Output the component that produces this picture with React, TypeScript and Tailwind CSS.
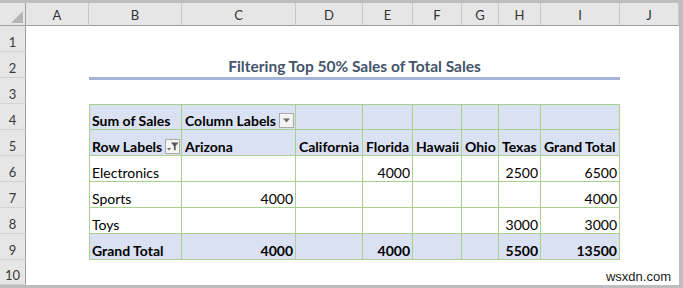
import { Fragment } from "react";
import clsx from "clsx";

const letters = ["A", "B", "C", "D", "E", "F", "G", "H", "I", "J"];

// rows 4..9, columns B..I
const pivot: string[][] = [
  ["Sum of Sales", "Column Labels", "", "", "", "", "", ""],
  ["Row Labels", "Arizona", "California", "Florida", "Hawaii", "Ohio", "Texas", "Grand Total"],
  ["Electronics", "", "", "4000", "", "", "2500", "6500"],
  ["Sports", "4000", "", "", "", "", "", "4000"],
  ["Toys", "", "", "", "", "", "3000", "3000"],
  ["Grand Total", "4000", "", "4000", "", "", "5500", "13500"],
];

const isNum = (s: string) => /^\d+$/.test(s);

const DropBtn = () => (
  <span className="ml-auto mr-[1px] mb-[1px] flex h-[15px] w-[15px] shrink-0 items-center justify-center self-end border border-[#ababab] bg-[#f3f3f3]">
    <svg width="9" height="5" viewBox="0 0 9 5">
      <path d="M1 0.5h7L4.5 4.5z" fill="#6e6e6e" />
    </svg>
  </span>
);

const FilterBtn = () => (
  <span className="ml-auto mr-[1px] mb-[1px] flex h-[15px] w-[15px] shrink-0 items-center justify-center self-end border border-[#ababab] bg-[#f3f3f3]">
    <svg width="13" height="11" viewBox="0 0 13 11">
      <path d="M1 7h4L3 9.5z" fill="#6e6e6e" />
      <path d="M5 1.5h7.5L9.6 5v4.8L7.9 8.6V5z" fill="#555" />
    </svg>
  </span>
);

const RowNum = ({ n }: { n: number }) => (
  <div className="flex items-end justify-center border-r border-b border-r-[#9f9f9f] border-b-[#d2d2d2] bg-[#e6e6e6] pb-[1px] text-[13px] leading-[16px] text-[#3a3a3a]">
    {n}
  </div>
);

const Blank = ({ span }: { span?: string }) => <div className={span} />;

const PivotCell = ({ r, c, v }: { r: number; c: number; v: string }) => {
  const blue = r === 0 || r === 1 || r === 5;
  return (
    <div
      className={clsx(
        "flex min-w-0 items-end overflow-hidden whitespace-nowrap border-r border-b border-[#a9d08e] leading-[17px] text-[14px] text-black",
        c === 0 ? "border-l pl-[2px]" : "pl-[3px]",
        r === 0 && "border-t",
        blue ? "bg-[#d9e1f2] font-bold" : "bg-white",
        isNum(v) ? "justify-end pr-[2px]" : "justify-start",
      )}
    >
      <span>{v}</span>
      {r === 0 && c === 1 && <DropBtn />}
      {r === 1 && c === 0 && <FilterBtn />}
    </div>
  );
};

export default function App() {
  return (
    <div className="h-[288px] w-[683px] bg-[#bdbdbd] pt-[3px] pr-[4px] pb-[3px] font-['Lato','Liberation_Sans',sans-serif]">
      <div className="grid h-[282px] w-[679px] grid-cols-[26px_63px_93px_114px_67px_50px_49px_37px_42px_79px_59px] grid-rows-[23px_repeat(9,26px)_25px] bg-white">
        {/* heading row */}
        <div className="flex items-end justify-end border-r border-b border-r-[#9f9f9f] border-b-[#9f9f9f] bg-[#e6e6e6] p-[2px]">
          <svg width="12" height="12" viewBox="0 0 12 12">
            <path d="M12 0V12H0z" fill="#b5b5b5" />
          </svg>
        </div>
        {letters.map((l) => (
          <div
            key={l}
            className="flex items-center justify-center border-r border-b border-r-[#c8c8c8] border-b-[#9f9f9f] bg-[#e6e6e6] pt-[1px] text-[13px] leading-[16px] text-[#333]"
          >
            {l}
          </div>
        ))}

        {/* row 1 */}
        <RowNum n={1} />
        {letters.map((l) => (
          <Blank key={l} />
        ))}

        {/* row 2: title */}
        <RowNum n={2} />
        <Blank />
        <div className="relative z-10 col-span-8 mb-[-2px] flex items-end justify-center border-b-[3px] border-[#a3b4d6] pb-[2px] text-[15.5px] font-bold leading-[18px] text-[#44546a]">
          Filtering Top 50% Sales of Total Sales
        </div>
        <Blank />

        {/* row 3 */}
        <RowNum n={3} />
        {letters.map((l) => (
          <Blank key={l} />
        ))}

        {/* rows 4-9: pivot table */}
        {pivot.map((row, r) => (
          <Fragment key={r}>
            <RowNum n={r + 4} />
            <Blank />
            {row.map((v, c) => (
              <PivotCell key={c} r={r} c={c} v={v} />
            ))}
            <Blank />
          </Fragment>
        ))}

        {/* row 10 */}
        <RowNum n={10} />
        {letters.slice(0, 8).map((l) => (
          <Blank key={l} />
        ))}
        <div className="col-span-2 flex items-end justify-end pr-[8px] font-['Liberation_Sans',Arial,sans-serif] text-[13px] leading-[16px] text-[#1a1a1a]">
          wsxdn.com
        </div>
      </div>
    </div>
  );
}
